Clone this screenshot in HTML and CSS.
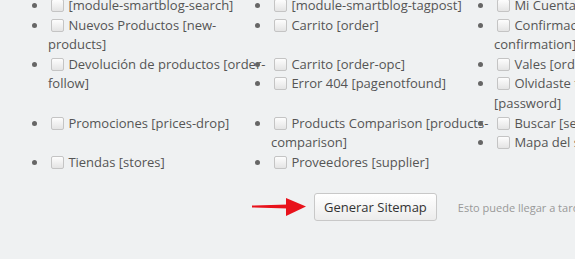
FILE: index.html
```html
<!DOCTYPE html>
<html>
    <head>
        <meta charset="utf-8">
        <link rel="stylesheet" href="styles.css">
    </head>
    <body>
        <ul class="pages">
            <li><label><input type="checkbox"> [module-smartblog-search]</label></li>
            <li><label><input type="checkbox"> [module-smartblog-tagpost]</label></li>
            <li><label><input type="checkbox"> Mi Cuenta [my-account]</label></li>
            <li><label><input type="checkbox"> Nuevos Productos [new-products]</label></li>
            <li><label><input type="checkbox"> Carrito [order]</label></li>
            <li><label><input type="checkbox"> Confirmación de pedido [order-confirmation]</label></li>
            <li><label><input type="checkbox"> Devolución de productos [order-follow]</label></li>
            <li><label><input type="checkbox"> Carrito [order-opc]</label></li>
            <li><label><input type="checkbox"> Vales [order-slip]</label></li>
            <li><label><input type="checkbox"> Error 404 [pagenotfound]</label></li>
            <li><label><input type="checkbox"> Olvidaste tu contraseña [password]</label></li>
            <li><label><input type="checkbox"> Promociones [prices-drop]</label></li>
            <li><label><input type="checkbox"> Products Comparison [products-comparison]</label></li>
            <li><label><input type="checkbox"> Buscar [search]</label></li>
            <li><label><input type="checkbox"> Mapa del sitio [sitemap]</label></li>
            <li><label><input type="checkbox"> Tiendas [stores]</label></li>
            <li><label><input type="checkbox"> Proveedores [supplier]</label></li>
        </ul>

        <div class="actions">
            <svg class="arrow" width="56" height="20" viewBox="0 0 56 20">
                <path d="M0 8.5 L36 7.5 L36 11.5 L0 10.5 Z" fill="#e8121b"/>
                <path d="M34 1 L54 9.5 L34 19 Z" fill="#e8121b"/>
            </svg>
            <button type="button" class="btn">Generar Sitemap</button>
            <span class="help">Esto puede llegar a tardar algunos minutos</span>
        </div>
    </body>
</html>
```

FILE: styles.css
```css
body {
    margin: 0;
    background-color: #eff1f2;
    font-family: "Open Sans", "Liberation Sans", sans-serif;
    font-size: 13px;
    color: #555;
    overflow: hidden;
}

.pages {
    margin: -4px 0 0;
    padding: 0 0 0 48px;
    width: 669px;
    list-style: disc;
    overflow: hidden;
}

.pages li {
    float: left;
    width: 223px;
    line-height: 19.6px;
}

.pages li::marker {
    color: #666;
}

.pages input[type=checkbox] {
    -webkit-appearance: none;
    appearance: none;
    width: 13px;
    height: 13px;
    margin: 0 1px 0 3px;
    border: 1px solid #c4c4c4;
    border-radius: 2px;
    background: linear-gradient(#fdfdfd, #e4e4e4);
    vertical-align: -2px;
}

.actions {
    display: flex;
    align-items: center;
    padding: 21px 0 0 252px;
    white-space: nowrap;
}

.arrow {
    flex-shrink: 0;
    margin-right: 6px;
}

.btn {
    flex-shrink: 0;
    height: 28px;
    padding: 0 9px;
    font-family: inherit;
    font-size: 13px;
    color: #333;
    background: linear-gradient(#ffffff, #ececec);
    border: 1px solid #c8c8c8;
    border-radius: 3px;
}

.help {
    margin-left: 21px;
    font-size: 11px;
    color: #999;
}
```
